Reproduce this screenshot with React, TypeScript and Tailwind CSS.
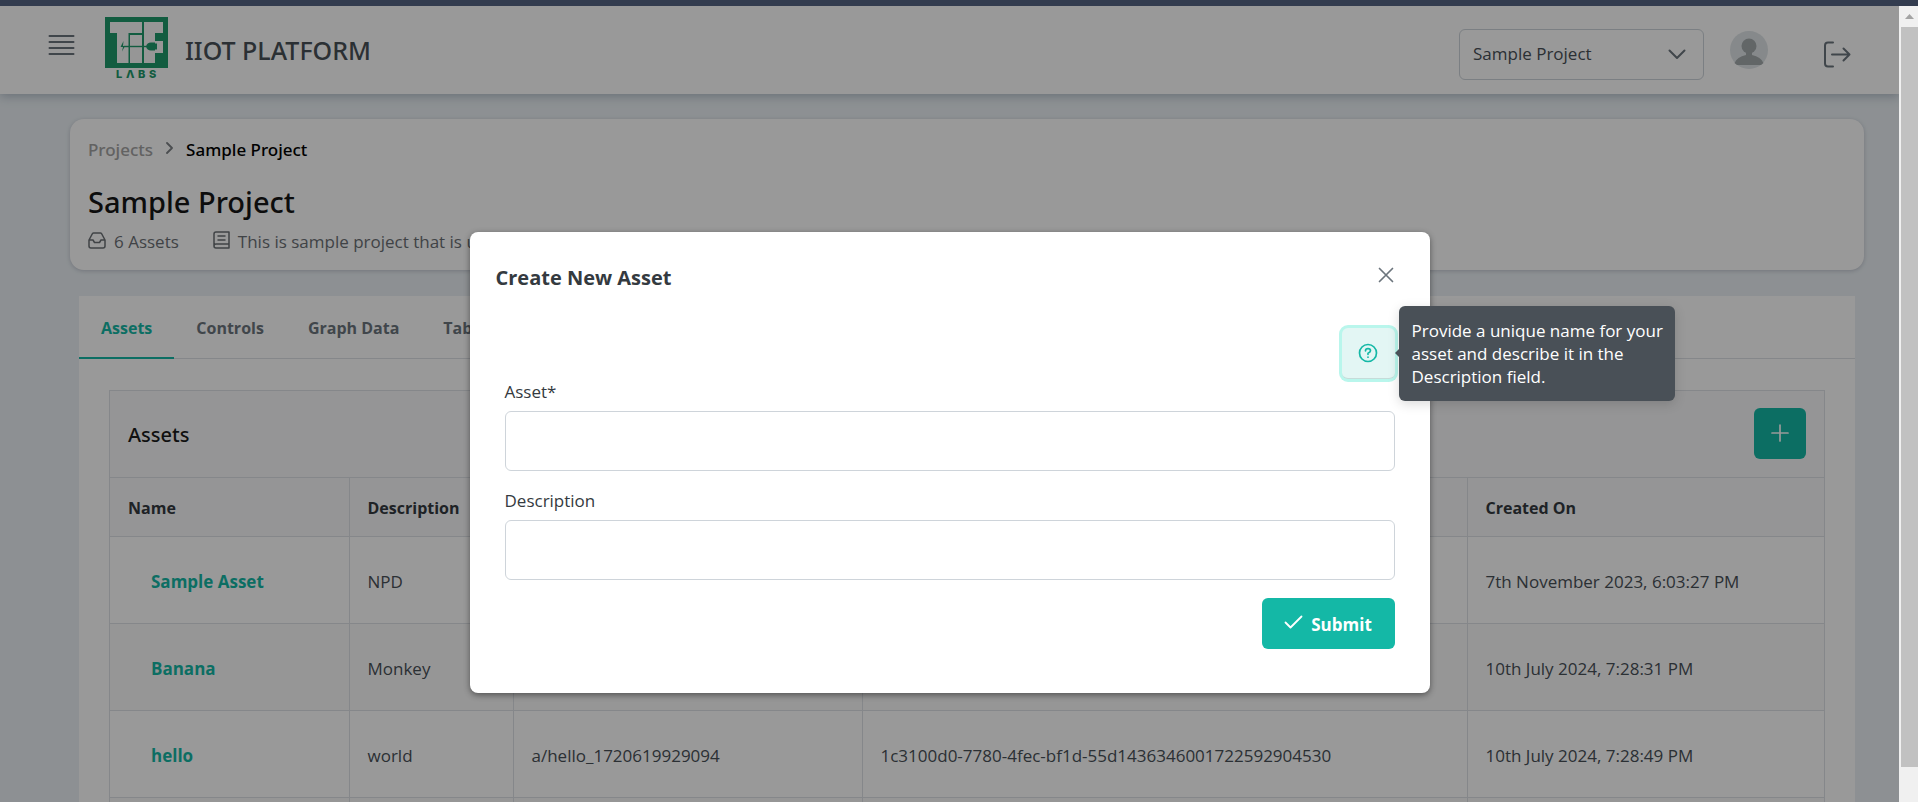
import React from 'react';

interface Asset {
  name: string;
  description: string;
  topic: string;
  token: string;
  createdOn: string;
}

const assets: Asset[] = [
  { name: 'Sample Asset', description: 'NPD', topic: '', token: '', createdOn: '7th November 2023, 6:03:27 PM' },
  { name: 'Banana', description: 'Monkey', topic: '', token: '', createdOn: '10th July 2024, 7:28:31 PM' },
  {
    name: 'hello',
    description: 'world',
    topic: 'a/hello_1720619929094',
    token: '1c3100d0-7780-4fec-bf1d-55d1436346001722592904530',
    createdOn: '10th July 2024, 7:28:49 PM',
  },
  { name: '', description: '', topic: '', token: '', createdOn: '' },
];

const columns = ['Name', 'Description', '', '', 'Created On'];

const tabs = ['Assets', 'Controls', 'Graph Data', 'Table Data'];

const Logo = () => (
  <svg width="63" height="63" viewBox="0 0 63 63" role="img" aria-label="TIF Labs">
    <rect width="63" height="51" fill="#1f9a6c" />
    <path fill="#fafafa" d="M5 5H37V16H23.500V46H12V16H5ZM25 18H37V46H25ZM39 5H58V16H50V24H58V36H50V46H39Z" />
    <path stroke="#1f9a6c" strokeWidth="1.400" d="M19 29.500H44" />
    <path fill="#1f9a6c" d="M18.500 24L15.500 30H18L17 34.500L20 29H18ZM41 29.500Q42 25.500 46 25.500H50V33.500H46Q42 33.500 41 29.500ZM50 26.500H52V32.500H50Z" />
    <text x="11 21 33 44" y="61" fill="#1f9a6c" fontFamily="Inter, sans-serif" fontWeight="800" fontSize="11">
      LΛBS
    </text>
  </svg>
);

const Header = () => (
  <header className="relative flex h-[88px] shrink-0 items-center bg-white px-12 shadow-[0_2px_10px_rgba(60,80,110,0.35)]">
    <button aria-label="Toggle menu" className="mb-[10px] text-[#6c757d]">
      <svg width="27" height="22" viewBox="0 0 27 22" stroke="currentColor" strokeWidth="2" strokeLinecap="round">
        <path d="M1.500 2H25.500M1.500 8H25.500M1.500 14H25.500M1.500 20H25.500" />
      </svg>
    </button>
    <a href="#" className="mb-1 ml-[30px] flex items-center gap-[17px]">
      <Logo />
      <span className="pt-1 font-['Noto_Sans',sans-serif] text-[25px] leading-8 font-medium text-[#495057]">IIOT PLATFORM</span>
    </a>

    <div className="mt-2 ml-auto flex items-center">
      <div className="relative">
        <select
          aria-label="Project"
          className="h-[51px] w-[245px] appearance-none rounded-md border border-[#ced4da] bg-white pl-[13px] text-[17px] text-[#495057]"
        >
          <option>Sample Project</option>
        </select>
        <svg className="pointer-events-none absolute top-5 right-[18px] text-[#6c757d]" width="18" height="11" viewBox="0 0 18 11" fill="none" stroke="currentColor" strokeWidth="2" strokeLinecap="round" strokeLinejoin="round">
          <path d="M1.500 1.500L9 9L16.500 1.500" />
        </svg>
      </div>
      <svg className="mb-2 ml-[26px]" width="38" height="38" viewBox="0 0 38 38">
        <circle cx="19" cy="19" r="19" fill="#dfe5e8" />
        <circle cx="19" cy="15" r="7.500" fill="#a4aaac" />
        <path fill="#a4aaac" d="M16 20H22V24Q31 26 33.500 32L31 34H7L4.500 32Q7 26 16 24Z" />
      </svg>
      <button aria-label="Log out" className="ml-[55px] text-[#6c757d]">
        <svg width="28" height="27" viewBox="0 0 28 27" fill="none" stroke="currentColor" strokeWidth="2" strokeLinecap="round" strokeLinejoin="round">
          <path d="M10 1.500H5Q2 1.500 2 4.500V22.500Q2 25.500 5 25.500H10M9 13.500H26.500M20.500 7.500L26.500 13.500L20.500 19.500" />
        </svg>
      </button>
    </div>
  </header>
);

const ProjectCard = () => (
  <section className="mr-[35px] ml-[70px] h-[151px] shrink-0 rounded-[14px] bg-white px-[18px] pt-[19px] shadow-[0_1px_4px_rgba(60,60,90,0.25)]">
    <nav aria-label="Breadcrumb" className="flex h-6 items-center font-['Noto_Sans',sans-serif] text-[17px] font-medium">
      <a href="#" className="text-[#a3a3a3]">Projects</a>
      <svg className="mx-[13px] mb-1" width="7" height="12" viewBox="0 0 7 12" fill="none" stroke="#7d8185" strokeWidth="1.800" strokeLinecap="round" strokeLinejoin="round">
        <path d="M1 1L6 6L1 11" />
      </svg>
      <span className="text-black">Sample Project</span>
    </nav>
    <h1 className="mt-5 font-['Noto_Sans',sans-serif] text-[29px] leading-10 font-medium text-[#171717]">Sample Project</h1>
    <div className="mt-2 flex h-6 items-center text-[17px] text-[#6b7075]">
      <svg className="mb-1" width="18" height="17" viewBox="0 0 18 17" fill="none" stroke="currentColor" strokeWidth="1.500" strokeLinejoin="round">
        <path d="M1 8L4.500 1.500Q5 1 5.500 1H12.500Q13 1 13.500 1.500L17 8V14Q17 16 15 16H3Q1 16 1 14ZM1 8H5L6.500 10.500H11.500L13 8H17" />
      </svg>
      <span className="ml-2">6 Assets</span>
      <svg className="mb-1 ml-[34px]" width="17" height="18" viewBox="0 0 17 18" fill="none" stroke="currentColor" strokeWidth="1.500" strokeLinecap="round" strokeLinejoin="round">
        <path d="M1 15V3Q1 1 3 1H16V17H3Q1 17 1 15Q1 13 3 13H16M5 5H12M5 9H12" />
      </svg>
      <span className="ml-2">This is sample project that is used</span>
    </div>
  </section>
);

const AssetTable = () => (
  <section className="mx-[30px] mt-[31px] border border-[#dee2e6]">
    <div className="flex h-[86px] items-center justify-between bg-[#f8f9fa] px-[18px]">
      <h2 className="pt-[2px] font-['Noto_Sans',sans-serif] text-[20px] font-medium text-[#1c1c1c]">Assets</h2>
      <button aria-label="Add asset" className="mb-[2px] flex h-[51px] w-[52px] items-center justify-center rounded-md bg-[#14b8a6] text-white">
        <svg width="18" height="18" viewBox="0 0 18 18" stroke="currentColor" strokeWidth="1.700" strokeLinecap="round">
          <path d="M9 1V17M1 9H17" />
        </svg>
      </button>
    </div>
    <table className="w-full table-fixed text-left text-[17px] text-[#495057]">
      <colgroup>
        <col className="w-[239px]" />
        <col className="w-[164px]" />
        <col className="w-[349px]" />
        <col />
        <col className="w-[357px]" />
      </colgroup>
      <thead className="bg-[#f8f9fa] text-[#343a40]">
        <tr className="h-[59px] border-y border-[#dee2e6]">
          {columns.map((label, i) => (
            <th key={i} className="border-r border-[#dee2e6] px-[18px] pt-[2px] text-[16px] font-bold last:border-r-0">
              {label}
            </th>
          ))}
        </tr>
      </thead>
      <tbody>
        {assets.map((asset) => (
          <tr key={asset.name} className="h-[87px] border-b border-[#dee2e6] even:bg-[#fbfbfb]">
            <td className="border-r border-[#dee2e6] px-[41px] pt-[3px]">
              <a href="#" className="font-bold text-[#14b8a6]">{asset.name}</a>
            </td>
            <td className="border-r border-[#dee2e6] px-[18px] pt-[3px]">{asset.description}</td>
            <td className="border-r border-[#dee2e6] px-[18px] pt-[3px]">{asset.topic}</td>
            <td className="border-r border-[#dee2e6] px-[18px] pt-[3px]">{asset.token}</td>
            <td className="px-[18px] pt-[3px]">{asset.createdOn}</td>
          </tr>
        ))}
      </tbody>
    </table>
  </section>
);

const CreateAssetDialog = () => (
  <div role="dialog" aria-labelledby="dialog-title" className="min-h-[461px] w-[960px] max-w-full shrink-0 rounded-lg bg-white shadow-[0_2px_6px_rgba(0,0,0,0.45)]">
    <div className="flex h-[92px] items-center justify-between pr-[36px] pl-[26px]">
      <h2 id="dialog-title" className="text-[20px] font-bold text-[#343a40]">Create New Asset</h2>
      <button aria-label="Close" className="mb-[6px] text-[#6c757d]">
        <svg width="16" height="16" viewBox="0 0 16 16" stroke="currentColor" strokeWidth="1.700" strokeLinecap="round">
          <path d="M1.500 1.500L14.500 14.500M14.500 1.500L1.500 14.500" />
        </svg>
      </button>
    </div>
    <form className="flex flex-col px-[35px]" onSubmit={(e) => e.preventDefault()}>
      <div className="relative self-end">
        <button
          type="button"
          aria-label="Help"
          aria-describedby="help-tip"
          className="mt-1 flex h-[51px] w-[53px] items-center justify-center rounded-md border-b border-[#c5dcd9] bg-[#e3f6f4] text-[#14b8a6] ring-3 ring-[#b9f6ec]"
        >
          <svg width="20" height="20" viewBox="0 0 20 20" fill="none" stroke="currentColor" strokeWidth="1.700" strokeLinecap="round" strokeLinejoin="round">
            <circle cx="10" cy="10" r="8.500" />
            <path d="M7.500 7.800Q7.500 5.600 10 5.600Q12.500 5.600 12.500 7.800Q12.500 9.300 10 10.200V11.300M10 14V14.200" />
          </svg>
        </button>
        <div
          id="help-tip"
          role="tooltip"
          className="absolute -top-[18px] left-full ml-1 w-[276px] rounded-md bg-[#495057] py-[13px] pr-2 pl-[13px] text-[17px] leading-[23px] text-white shadow-[0_3px_12px_rgba(0,0,0,0.15)]"
        >
          <span className="absolute top-[43px] -left-1 size-0 border-y-4 border-r-4 border-y-transparent border-r-[#495057]" />
          Provide a unique name for your asset and describe it in the Description field.
        </div>
      </div>
      <label htmlFor="asset" className="h-8 text-[17px] leading-[26px] text-[#343a40]">Asset*</label>
      <input id="asset" className="h-[60px] rounded-md border border-[#ced4da] px-3 text-[17px]" />
      <label htmlFor="description" className="mt-[17px] h-8 text-[17px] leading-[26px] text-[#343a40]">Description</label>
      <input id="description" className="h-[60px] rounded-md border border-[#ced4da] px-3 text-[17px]" />
      <button className="mt-[18px] flex h-[51px] w-[133px] items-center justify-center gap-2 self-end rounded-md bg-[#14b8a6] pt-[2px] text-[17px] font-bold text-white">
        <svg className="mb-[6px]" width="19" height="14" viewBox="0 0 19 14" fill="none" stroke="currentColor" strokeWidth="1.800" strokeLinecap="round" strokeLinejoin="round">
          <path d="M1.500 7.500L6.500 12.500L17.500 1.500" />
        </svg>
        Submit
      </button>
    </form>
  </div>
);

const ScrollTrack = () => (
  <div className="flex w-[19px] shrink-0 flex-col bg-[#f0f0f0] pl-[2px]">
    <div className="flex h-[21px] shrink-0 items-center justify-center">
      <svg width="9" height="5" viewBox="0 0 9 5" fill="#a3a3a3">
        <path d="M0 5L4.500 0L9 5Z" />
      </svg>
    </div>
    <div className="mb-[35px] flex-1 bg-[#c1c1c1]" />
  </div>
);

export default function App() {
  return (
    <div className="flex h-screen flex-col overflow-hidden font-['Open_Sans',sans-serif]">
      <div className="h-[6px] shrink-0 bg-[#333c4f]" />
      <div className="flex min-h-0 flex-1">
        <main className="relative flex min-w-0 flex-1 flex-col overflow-hidden bg-[#ebf1f5]">
          <Header />
          <div className="h-[25px] shrink-0" />
          <ProjectCard />
          <section className="mt-[26px] mr-[44px] ml-[79px] flex-1 bg-white">
            <div role="tablist" className="flex h-[63px] border-b border-[#dee2e6]">
              {tabs.map((tab, i) => (
                <button
                  key={tab}
                  role="tab"
                  aria-selected={i === 0}
                  className={`-mb-px border-b-2 px-[22px] pt-[2px] text-[16px] font-bold ${
                    i === 0 ? 'border-[#14b8a6] text-[#14b8a6]' : 'border-transparent text-[#6c757d]'
                  }`}
                >
                  {tab}
                </button>
              ))}
            </div>
            <AssetTable />
          </section>

          <div className="absolute inset-0 flex items-start justify-center bg-black/40 pt-[226px]">
            <CreateAssetDialog />
          </div>
        </main>
        <ScrollTrack />
      </div>
    </div>
  );
}
